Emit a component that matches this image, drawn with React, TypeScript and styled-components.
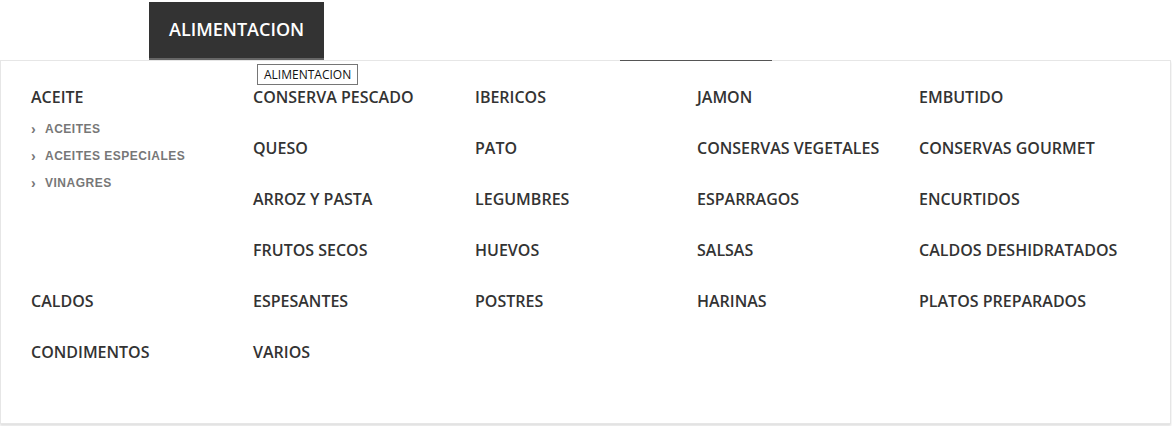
import React from "react";
import styled, { createGlobalStyle } from "styled-components";

const GlobalStyle = createGlobalStyle`
  body {
    margin: 0;
    background: #fff;
    font-family: "Open Sans", "Liberation Sans", sans-serif;
  }
`;

const Page = styled.div`
  position: relative;
  width: 1172px;
  height: 426px;
`;

const Header = styled.div`
  display: flex;
  height: 60px;
  padding: 2px 0 0 149px;
  box-sizing: border-box;
`;

const Tab = styled.div`
  display: flex;
  align-items: center;
  box-sizing: border-box;
  width: 175px;
  height: 58px;
  padding: 0 0 2px 20px;
  background: #333;
  border-bottom: 2px solid #666;
  color: #fff;
  font-size: 18px;
  font-weight: 600;
`;

const Panel = styled.div`
  position: relative;
  width: 1171px;
  height: 364px;
  box-sizing: border-box;
  border: 1px solid #e6e6e6;
  box-shadow: 0 2px 2px rgba(0, 0, 0, 0.12);
  padding: 26px 0 0 30px;
`;

const ActiveMark = styled.div`
  position: absolute;
  top: -1px;
  left: 619px;
  width: 152px;
  height: 1px;
  background: #555;
`;

const Grid = styled.div`
  display: grid;
  grid-template-columns: repeat(5, 222px);
  grid-auto-rows: 51px;
`;

const Item = styled.div<{ $span?: number }>`
  grid-row: ${({ $span }) => ($span ? `span ${$span}` : "auto")};
`;

const Title = styled.div`
  color: #333;
  font-size: 16px;
  font-weight: 600;
  line-height: 20px;
`;

const SubList = styled.ul`
  list-style: none;
  margin: 8px 0 0;
  padding: 0;
`;

const SubItem = styled.li`
  display: flex;
  align-items: center;
  height: 27px;
  color: #777;
  font-family: "Liberation Sans", Arial, sans-serif;
  font-size: 12px;
  font-weight: 700;
  letter-spacing: 0.5px;
`;

const Chevron = styled.span`
  width: 14px;
  font-size: 14px;
  font-weight: 700;
  line-height: 1;
`;

const Tooltip = styled.div`
  position: absolute;
  left: 257px;
  top: 64px;
  padding: 3px 6px 2px;
  border: 1px solid #767676;
  background: #fff;
  color: #111;
  font-family: "Open Sans", sans-serif;
  font-size: 12px;
  line-height: 14px;
`;

type Entry = { name: string; subs?: string[] };

const entries: Entry[] = [
  { name: "ACEITE", subs: ["ACEITES", "ACEITES ESPECIALES", "VINAGRES"] },
  { name: "CONSERVA PESCADO" },
  { name: "IBERICOS" },
  { name: "JAMON" },
  { name: "EMBUTIDO" },
  { name: "QUESO" },
  { name: "PATO" },
  { name: "CONSERVAS VEGETALES" },
  { name: "CONSERVAS GOURMET" },
  { name: "ARROZ Y PASTA" },
  { name: "LEGUMBRES" },
  { name: "ESPARRAGOS" },
  { name: "ENCURTIDOS" },
  { name: "FRUTOS SECOS" },
  { name: "HUEVOS" },
  { name: "SALSAS" },
  { name: "CALDOS DESHIDRATADOS" },
  { name: "CALDOS" },
  { name: "ESPESANTES" },
  { name: "POSTRES" },
  { name: "HARINAS" },
  { name: "PLATOS PREPARADOS" },
  { name: "CONDIMENTOS" },
  { name: "VARIOS" },
];

const App = () => {
  return (
    <Page>
      <GlobalStyle />
      <Header>
        <Tab>ALIMENTACION</Tab>
      </Header>
      <Panel>
        <ActiveMark />
        <Grid>
          {entries.map((entry) => (
            <Item key={entry.name} $span={entry.subs ? 4 : undefined}>
              <Title>{entry.name}</Title>
              {entry.subs && (
                <SubList>
                  {entry.subs.map((sub) => (
                    <SubItem key={sub}>
                      <Chevron>›</Chevron>
                      {sub}
                    </SubItem>
                  ))}
                </SubList>
              )}
            </Item>
          ))}
        </Grid>
      </Panel>
      <Tooltip>ALIMENTACION</Tooltip>
    </Page>
  );
};

export default App;
